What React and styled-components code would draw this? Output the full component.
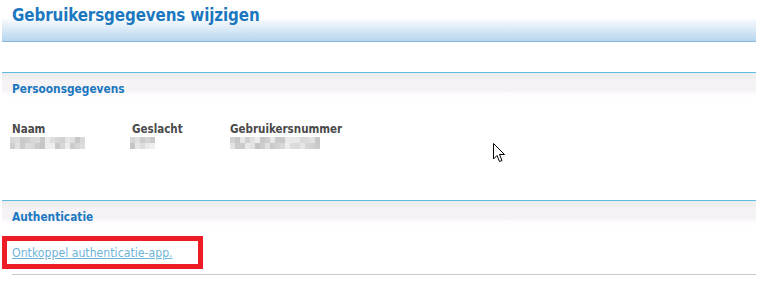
import React from "react";
import styled, { createGlobalStyle } from "styled-components";

const Global = createGlobalStyle`
  html, body { margin: 0; padding: 0; background: #fff; }
  body { font-family: "DejaVu Sans Condensed", "DejaVu Sans", sans-serif; }
`;

const Page = styled.div`
  position: relative;
  width: 754px;
  margin-left: 2px;
`;

const Header = styled.div`
  height: 42px;
  box-sizing: border-box;
  border-bottom: 1px solid #8cb9df;
  background: linear-gradient(to bottom, #fff 0, #fff 19px, #f6f9fd 20px, #b6d6ee 41px);
`;

const Title = styled.h1`
  margin: 0;
  padding: 5px 0 0 10px;
  font-size: 16.8px;
  line-height: 21px;
  font-weight: bold;
  letter-spacing: -0.1px;
  color: #1b78c0;
`;

const Section = styled.section`
  margin-top: ${(p) => p.$top}px;
`;

const SectionHead = styled.div`
  border-top: 1px solid #5dbee2;
  height: 26px;
  box-sizing: border-box;
  background: linear-gradient(to bottom, #ececec 0, #f0eff0 4px, #f5f3f5 8px, #f5f3f5 18px, #fcf9fd 19px, #fff 26px);
  padding: 9px 0 0 10px;
`;

const SectionTitle = styled.h2`
  margin: 0;
  font-size: 11.8px;
  line-height: 14px;
  font-weight: bold;
  color: #1b78c0;
`;

const Fields = styled.div`
  display: flex;
  padding: 25px 0 0 10px;
  height: 102px;
  box-sizing: border-box;
`;

const Field = styled.div`
  width: ${(p) => p.$w}px;
  display: flex;
  flex-direction: column;
  gap: 1px;
`;

const Label = styled.div`
  font-size: 11.5px;
  line-height: 13px;
  font-weight: bold;
  color: #4a4a4a;
`;

const Mosaic = styled.div`
  display: grid;
  grid-template-columns: repeat(${(p) => p.$cols}, 5px);
  grid-auto-rows: 6px;
  margin-left: ${(p) => p.$ml || 0}px;
`;

const Cell = styled.span`
  display: block;
`;

const LinkRow = styled.div`
  position: relative;
  margin-left: 10px;
  padding: 16px 0 13px 0;
  border-bottom: 1px solid #c9c9c9;
`;

const Link = styled.a`
  font-size: 12.2px;
  line-height: 15px;
  color: #6db4d9;
  text-decoration: underline;
  cursor: pointer;
`;

const Highlight = styled.div`
  position: absolute;
  left: -10px;
  top: 10px;
  width: 201px;
  height: 33px;
  border: 5px solid #ee1c25;
  box-sizing: border-box;
  pointer-events: none;
`;

const Cursor = styled.svg`
  position: absolute;
  left: 491px;
  top: 143px;
`;

const shades = (seed, n) => {
  const out = [];
  let s = seed;
  for (let i = 0; i < n; i++) {
    s = (s * 9301 + 49297) % 233280;
    const v = 196 + Math.floor((s / 233280) * 44);
    out.push(`rgb(${v},${v},${v})`);
  }
  return out;
};

function Blur({ cols, seed, ml }) {
  const cells = shades(seed, cols * 2);
  return (
    <Mosaic $cols={cols} $ml={ml}>
      {cells.map((c, i) => (
        <Cell key={i} style={{ background: c }} />
      ))}
    </Mosaic>
  );
}

export default function App() {
  return (
    <>
      <Global />
      <Page>
        <Header>
          <Title>Gebruikersgegevens wijzigen</Title>
        </Header>
        <Section $top={30}>
          <SectionHead>
            <SectionTitle>Persoonsgegevens</SectionTitle>
          </SectionHead>
          <Fields>
            <Field $w={120}>
              <Label>Naam</Label>
              <Blur cols={15} seed={7} ml={-2} />
            </Field>
            <Field $w={98}>
              <Label>Geslacht</Label>
              <Blur cols={5} seed={31} ml={-2} />
            </Field>
            <Field $w={200}>
              <Label>Gebruikersnummer</Label>
              <Blur cols={18} seed={77} />
            </Field>
          </Fields>
        </Section>
        <Section $top={0}>
          <SectionHead>
            <SectionTitle>Authenticatie</SectionTitle>
          </SectionHead>
          <LinkRow>
            <Link>Ontkoppel authenticatie-app.</Link>
            <Highlight />
          </LinkRow>
        </Section>
        <Cursor width="13" height="20" viewBox="0 0 13 20">
          <path
            d="M0.5 0.5 L0.5 16 L4 12.5 L6.5 18.5 L9 17.5 L6.5 11.5 L11.5 11.5 Z"
            fill="#fff"
            stroke="#000"
            strokeWidth="1"
          />
        </Cursor>
      </Page>
    </>
  );
}
